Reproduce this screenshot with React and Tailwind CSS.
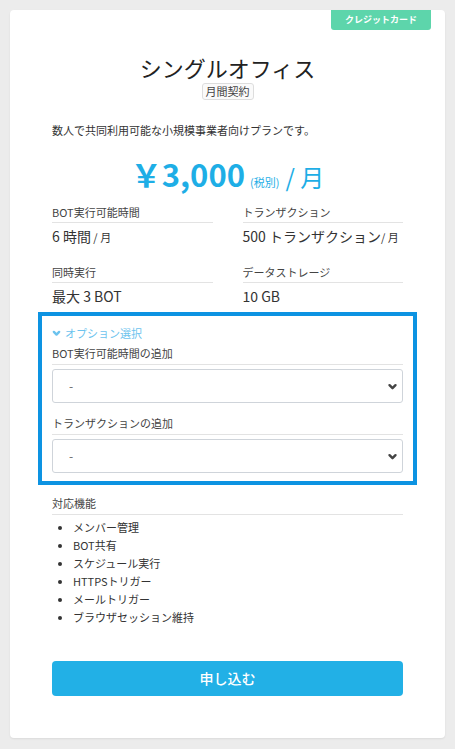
const FONT = { fontFamily: '"Noto Sans CJK JP", "Noto Sans", sans-serif' }

const specs = [
  { label: 'BOT実行可能時間', value: '6 時間', unit: ' / 月' },
  { label: 'トランザクション', value: '500 トランザクション', unit: '/ 月' },
  { label: '同時実行', value: '最大 3 BOT' },
  { label: 'データストレージ', value: '10 GB' },
]

const features = ['メンバー管理', 'BOT共有', 'スケジュール実行', 'HTTPSトリガー', 'メールトリガー', 'ブラウザセッション維持']

function Chevron({ className, width = 2.4 }) {
  return (
    <svg viewBox="0 0 10 8" className={className} fill="none" stroke="currentColor" strokeWidth={width} strokeLinecap="round" strokeLinejoin="round">
      <path d="M2 2.2 5 5.2 8 2.2" />
    </svg>
  )
}

function OptionSelect({ label }) {
  return (
    <div>
      <div className="text-[11px] leading-[16px] text-[#444] pb-[3px] border-b border-[#e3e3e3]">{label}</div>
      <div className="relative mt-[4px]">
        <select className="w-full h-[34px] appearance-none rounded-[3px] border border-[#cfd4da] bg-white pl-[16px] text-[12px] text-[#666] outline-none" style={FONT}>
          <option>-</option>
        </select>
        <Chevron className="pointer-events-none absolute right-[5px] top-[14px] w-[11px] h-[8px] text-[#444]" />
      </div>
    </div>
  )
}

export default function App() {
  return (
    <div className="min-h-[749px] bg-[#ececec] p-[10px]" style={FONT}>
      <div className="relative bg-white rounded-[4px] shadow-[0_1px_2px_rgba(0,0,0,0.08)] px-[42px] pt-[42px] pb-[42px] text-[#333]">
        <div className="absolute right-[14px] top-0 w-[100px] h-[20px] bg-[#5dd5ab] rounded-b-[3px] flex items-center justify-center text-white text-[9px] font-bold">
          クレジットカード
        </div>

        <div className="flex flex-col items-center">
          <h1 className="text-[22px] leading-[30px] text-[#222]">シングルオフィス</h1>
          <span className="mt-[1px] px-[3px] h-[17px] flex items-center border border-[#ddd] rounded-[3px] bg-[#fafafa] text-[11px] leading-[15px] text-[#444]">月間契約</span>
        </div>

        <p className="mt-[22px] text-[11px] leading-[16px] text-[#333]">数人で共同利用可能な小規模事業者向けプランです。</p>

        <div className="mt-[16px] flex items-baseline justify-center text-[#1eaee6]">
          <span className="text-[31px] leading-[40px] font-bold">￥3,000</span>
          <span className="ml-[5px] text-[11px]">(税別)</span>
          <span className="ml-[6px] text-[24px]">/ 月</span>
        </div>

        <div className="mt-[9px] grid grid-cols-2 gap-x-[30px] gap-y-[17px]">
          {specs.map(s => (
            <div key={s.label}>
              <div className="text-[11px] leading-[16px] text-[#444] pb-[2px] border-b border-[#e3e3e3]">{s.label}</div>
              <div className="mt-[3px] text-[14px] leading-[20px] text-[#333] whitespace-nowrap">
                {s.value}
                {s.unit && <span className="text-[11px]">{s.unit}</span>}
              </div>
            </div>
          ))}
        </div>

        <div className="mt-[6px] -mx-[14px] border-[4px] border-[#0d93e2] px-[10px] pt-[9px] pb-[8px]">
          <div className="flex items-center gap-[4px] text-[11px] leading-[16px] text-[#6cc3ee]">
            <Chevron className="w-[9px] h-[7px]" width={2.8} />
            <span>オプション選択</span>
          </div>
          <div className="mt-[4px] flex flex-col gap-[12px]">
            <OptionSelect label="BOT実行可能時間の追加" />
            <OptionSelect label="トランザクションの追加" />
          </div>
        </div>

        <div className="mt-[10px]">
          <div className="text-[11px] leading-[16px] text-[#444] pb-[3px] border-b border-[#e3e3e3]">対応機能</div>
          <ul className="mt-[3px] list-disc pl-[21px] text-[11px] leading-[18px] text-[#333]">
            {features.map(f => <li key={f}>{f}</li>)}
          </ul>
        </div>

        <button className="mt-[35px] w-full h-[35px] rounded-[4px] bg-[#22b0e6] text-white text-[14px] font-medium">申し込む</button>
      </div>
    </div>
  )
}
